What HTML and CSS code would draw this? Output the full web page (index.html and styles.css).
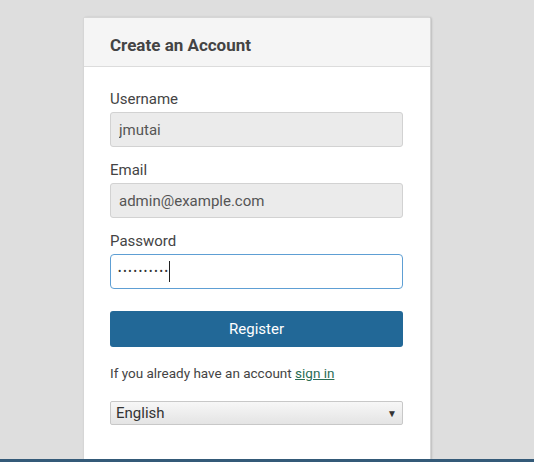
FILE: index.html
```html
<!DOCTYPE html>
<html lang="en">
<head>
  <meta charset="UTF-8" />
  <title>Create an Account</title>
  <link rel="stylesheet" href="styles.css">
</head>
<body>
  <div class="page">
    <div class="card">
      <div class="card-header">
        <h2>Create an Account</h2>
      </div>
      <form class="card-body" id="form">
        <label>Username</label>
        <input type="text" name="username" value="jmutai" readonly />

        <label>Email</label>
        <input type="email" name="email" value="admin@example.com" readonly />

        <label>Password</label>
        <div class="field focused">
          <span class="dots">••••••••••</span><span class="caret"></span>
        </div>

        <button type="submit">Register</button>

        <p class="signin">If you already have an account <a href="#">sign in</a></p>

        <div class="lang">
          <span>English</span>
          <span class="arrow">&#9660;</span>
        </div>
      </form>
    </div>
  </div>
  <div class="footer-bar"></div>
</body>
</html>
```

FILE: styles.css
```css
html, body {
  height: 100%;
}
body {
  background: #dedede;
  font-family: Roboto, 'Liberation Sans', sans-serif;
  margin: 0;
  color: #444;
  overflow: hidden;
  display: flex;
  flex-direction: column;
}
.page {
  flex: 1;
  padding: 17px 0 0 83px;
  overflow: hidden;
}
.card {
  width: 346px;
  height: 100%;
  background: #fff;
  border: 1px solid #d6d6d6;
  border-bottom: none;
  border-radius: 3px 3px 0 0;
  box-shadow: 1px 0 2px rgba(0, 0, 0, 0.15);
}
.card-header {
  background: #f5f5f5;
  border-bottom: 1px solid #dcdcdc;
  height: 49px;
  padding: 5px 26px 0;
  box-sizing: border-box;
  display: flex;
  align-items: center;
}
h2 {
  margin: 0;
  font-size: 17px;
  font-weight: bold;
  color: #444;
}
.card-body {
  padding: 23px 26px 0;
  display: flex;
  flex-direction: column;
}
label {
  font-size: 15px;
  color: #444;
  margin-bottom: 4px;
  line-height: 18px;
}
input[type="text"],
input[type="email"],
.field {
  box-sizing: border-box;
  width: 293px;
  height: 35px;
  padding: 0 8px;
  border: 1px solid #d2d2d2;
  border-radius: 3px;
  background: #ebebeb;
  font-family: inherit;
  font-size: 15px;
  color: #555;
  margin-bottom: 14px;
  outline: none;
}
.field {
  background: #fff;
  border: 1px solid #5e9fd4;
  border-radius: 4px;
  display: flex;
  align-items: center;
  padding-left: 7px;
}
.dots {
  font-size: 10px;
  letter-spacing: 1.8px;
  color: #333;
}
.caret {
  width: 1px;
  height: 21px;
  background: #222;
  margin-left: -1px;
}
button {
  width: 293px;
  height: 36px;
  margin-top: 8px;
  background: #226897;
  color: #fff;
  border: none;
  border-radius: 3px;
  font-family: inherit;
  font-size: 15px;
  cursor: pointer;
}
.signin {
  margin: 18px 0 0;
  font-size: 13.5px;
  line-height: 16px;
  color: #444;
}
.signin a {
  color: #2a6d55;
}
.lang {
  box-sizing: border-box;
  width: 293px;
  height: 24px;
  margin-top: 20px;
  padding: 0 5px 0 5px;
  border: 1px solid #c8c8c8;
  border-radius: 2px;
  background: linear-gradient(#f7f7f7, #e4e4e4);
  display: flex;
  align-items: center;
  justify-content: space-between;
  font-size: 15px;
  color: #333;
}
.arrow {
  font-size: 10px;
  color: #333;
}
.footer-bar {
  height: 3px;
  background: #345a78;
}
```
